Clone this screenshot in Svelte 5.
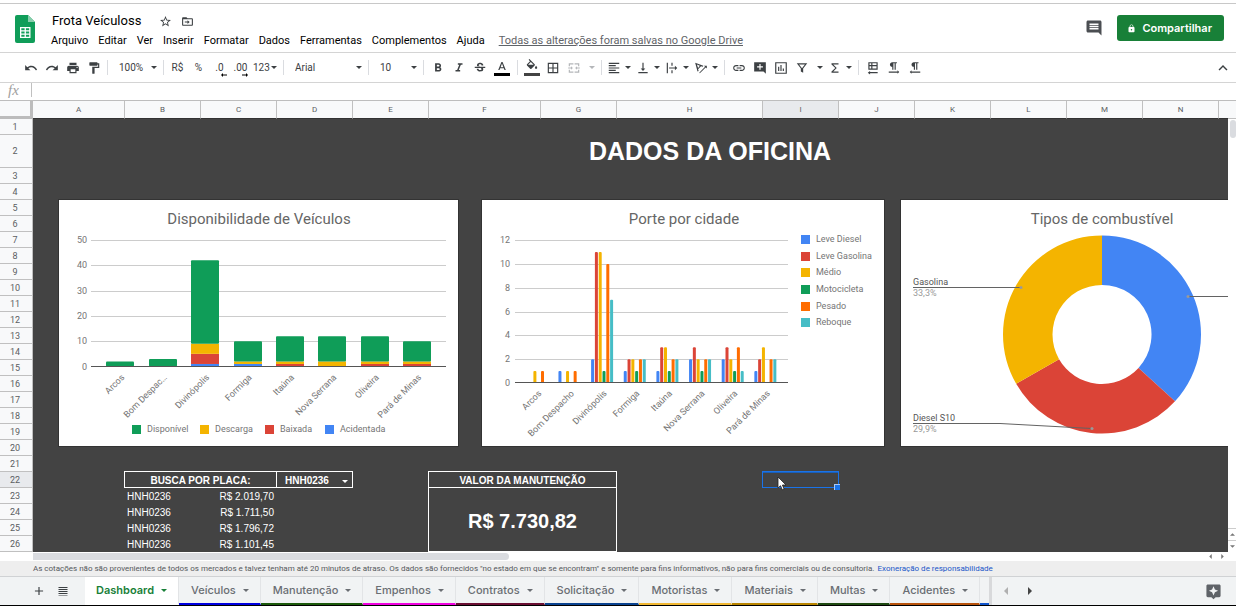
<script>
  const menus = ['Arquivo', 'Editar', 'Ver', 'Inserir', 'Formatar', 'Dados', 'Ferramentas', 'Complementos', 'Ajuda'];

  const columns = [
    ['A', 92], ['B', 76], ['C', 76], ['D', 76], ['E', 76], ['F', 112], ['G', 76], ['H', 146],
    ['I', 76], ['J', 76], ['K', 76], ['L', 76], ['M', 76], ['N', 76], ['O', 76]
  ];
  const rows = Array.from({ length: 26 }, (_, i) => i + 1);
  const costs = { 23: 'R$ 2.019,70', 24: 'R$ 1.711,50', 25: 'R$ 1.796,72', 26: 'R$ 1.101,45' };

  const tabs = [
    ['Dashboard', 'transparent'], ['Veículos', '#0000e0'], ['Manutenção', '#1c5a0c'], ['Empenhos', '#f000e0'],
    ['Contratos', '#6a0f33'], ['Solicitação', '#0b4390'], ['Motoristas', '#f1b732'], ['Materiais', '#b98500'],
    ['Multas', '#1f4a12'], ['Acidentes', '#b8530c']
  ];

  const blue = '#4285f4', red = '#db4437', yellow = '#f4b400', green = '#0f9d58', orange = '#ff6d00', teal = '#46bdc6';
  const cities = ['Arcos', 'Bom Despacho', 'Divinópolis', 'Formiga', 'Itaúna', 'Nova Serrana', 'Oliveira', 'Pará de Minas'];

  // Stacked from the axis up: acidentada, baixada, descarga, disponível
  const stackColors = [blue, red, yellow, green];
  const stacks = [
    [0, 0, 0, 2], [0, 0, 0, 3], [1, 4, 4, 33], [1, 0, 1, 8],
    [0, 1, 1, 10], [0, 0, 2, 10], [0, 1, 1, 10], [0, 1, 1, 8]
  ];
  const stackY = (v) => 166.5 - v * 2.53;
  const stackSegments = stacks.flatMap((values, i) => {
    let base = 0;
    return values.map((v, k) => {
      const seg = { x: Math.round(47.4 + i * 42.4), y: stackY(base + v), h: v * 2.53, fill: stackColors[k], top: k === 3 };
      base += v;
      return seg;
    }).filter((s) => s.h > 0);
  });
  const stackLegend = [['Disponível', green, 73], ['Descarga', yellow, 141], ['Baixada', red, 206], ['Acidentada', blue, 266]];

  const groupSeries = [
    ['Leve Diesel', blue], ['Leve Gasolina', red], ['Médio', yellow],
    ['Motocicleta', green], ['Pesado', orange], ['Reboque', teal]
  ];
  const groups = [
    [0, 0, 1, 0, 1, 0], [1, 0, 1, 0, 1, 0], [2, 11, 11, 1, 10, 7], [1, 2, 2, 1, 2, 2],
    [1, 3, 3, 1, 2, 2], [2, 3, 2, 1, 2, 2], [2, 3, 2, 1, 3, 1], [1, 2, 3, 0, 2, 2]
  ];
  const groupY = (v) => 183 - v * 11.9;

  function slice(from, to, fill) {
    const cx = 201, cy = 134.5, R = 99, r = 49.5;
    const pt = (p, rad) => {
      const a = p * 2 * Math.PI;
      return `${(cx + rad * Math.sin(a)).toFixed(2)} ${(cy - rad * Math.cos(a)).toFixed(2)}`;
    };
    return { fill, d: `M${pt(from, R)}A${R} ${R} 0 0 1 ${pt(to, R)}L${pt(to, r)}A${r} ${r} 0 0 0 ${pt(from, r)}Z` };
  }
  const slices = [slice(0, 0.368, blue), slice(0.368, 0.667, red), slice(0.667, 1, yellow)];

  const icons = {
    undo: 'M12.5 8c-2.65 0-5.05.99-6.9 2.6L2 7v9h9l-3.62-3.62c1.39-1.16 3.16-1.88 5.12-1.88 3.54 0 6.55 2.31 7.6 5.5l2.37-.78C21.08 11.03 17.15 8 12.5 8z',
    redo: 'M18.4 10.6C16.55 8.99 14.15 8 11.5 8c-4.65 0-8.58 3.03-9.96 7.22L3.9 16c1.05-3.19 4.05-5.5 7.6-5.5 1.95 0 3.73.72 5.12 1.88L13 16h9V7l-3.6 3.6z',
    print: 'M19 8H5c-1.66 0-3 1.34-3 3v6h4v4h12v-4h4v-6c0-1.66-1.34-3-3-3zm-3 11H8v-5h8v5zm3-7c-.55 0-1-.45-1-1s.45-1 1-1 1 .45 1 1-.45 1-1 1zm-1-9H6v4h12V3z',
    paint: 'M18 4V3c0-.55-.45-1-1-1H5c-.55 0-1 .45-1 1v4c0 .55.45 1 1 1h12c.55 0 1-.45 1-1V6h1v4H9v11c0 .55.45 1 1 1h2c.55 0 1-.45 1-1v-9h8V4h-3z',
    bold: 'M15.6 10.79c.97-.67 1.65-1.77 1.65-2.79 0-2.26-1.75-4-4-4H7v14h7.04c2.09 0 3.71-1.7 3.71-3.79 0-1.52-.86-2.82-2.15-3.42zM10 6.5h3c.83 0 1.5.67 1.5 1.5s-.67 1.5-1.5 1.5h-3v-3zm3.5 9H10v-3h3.5c.83 0 1.5.67 1.5 1.5s-.67 1.5-1.5 1.5z',
    italic: 'M10 4v2.6h2.4l-3.6 8.800H6V18h8v-2.600h-2.400l3.600-8.800H18V4z',
    strike: 'M7.24 8.75c-.26-.48-.39-1.03-.39-1.67 0-.61.13-1.16.4-1.67.26-.5.63-.93 1.11-1.29.48-.35 1.05-.63 1.7-.83.66-.19 1.39-.29 2.18-.29.81 0 1.54.11 2.21.34.66.22 1.23.54 1.69.94.47.4.83.88 1.08 1.43.25.55.38 1.15.38 1.81h-3.01c0-.31-.05-.59-.15-.85-.09-.27-.24-.49-.44-.68-.2-.19-.45-.33-.75-.44-.3-.1-.66-.16-1.06-.16-.39 0-.74.04-1.03.13-.29.09-.53.21-.72.36-.19.16-.34.34-.44.55-.1.21-.15.43-.15.66 0 .48.25.88.74 1.21.38.25.77.48 1.41.7H7.39c-.05-.08-.11-.17-.15-.25zM21 12v-2H3v2h9.62c.18.07.4.14.55.2.37.17.66.34.87.51.21.17.35.36.43.57.07.2.11.43.11.69 0 .23-.05.45-.14.66-.09.2-.23.38-.42.53-.19.15-.42.26-.71.35-.29.08-.63.13-1.01.13-.43 0-.83-.04-1.18-.13s-.66-.23-.91-.42c-.25-.19-.45-.44-.59-.75-.14-.31-.25-.76-.25-1.21H6.4c0 .55.08 1.13.24 1.58.16.45.37.85.65 1.21.28.35.6.66.98.92.37.26.78.48 1.22.65.44.17.9.3 1.38.39.48.08.96.13 1.44.13.8 0 1.53-.09 2.18-.28s1.21-.45 1.67-.79c.46-.34.82-.77 1.07-1.27s.38-1.07.38-1.71c0-.6-.1-1.14-.31-1.61-.05-.11-.11-.23-.17-.33H21z',
    textColor: 'M11 5L5.500 19h2.250l1.120-3h6.250l1.120 3h2.250L13 5h-2zm-1.380 9L12 7.670 14.380 14H9.620z',
    fill: 'M16.56 8.94L7.62 0 6.21 1.41l2.38 2.38-5.15 5.15c-.59.59-.59 1.54 0 2.12l5.5 5.5c.29.29.68.44 1.06.44s.77-.15 1.06-.44l5.5-5.5c.59-.58.59-1.53 0-2.12zM5.21 10L10 5.21 14.79 10H5.21zM19 11.5s-2 2.17-2 3.5c0 1.1.9 2 2 2s2-.9 2-2c0-1.33-2-3.5-2-3.5z',
    borders: 'M3 3v18h18V3H3zm8 16H5v-6h6v6zm0-8H5V5h6v6zm8 8h-6v-6h6v6zm0-8h-6V5h6v6z',
    merge: 'M3 4h8v2H5v3H3zM13 4h8v5h-2V6h-6zM3 15h2v3h6v2H3zM19 15h2v5h-8v-2h6zM2 11h5V9l3 3-3 3v-2H2zM22 11h-5V9l-3 3 3 3v-2h5z',
    align: 'M15 15H3v2h12v-2zm0-8H3v2h12V7zM3 13h18v-2H3v2zm0 8h18v-2H3v2zM3 3v2h18V3H3z',
    valign: 'M16 13h-3V3h-2v10H8l4 4 4-4zM4 19v2h16v-2H4z',
    wrap: 'M3 3h2v18H3zM11 3h2v5h-2zM11 16h2v5h-2zM7 11h10V8l4 4-4 4v-3H7z',
    rotate: 'M2 3l14 5-1 2-3-1-5 5 1 3-2 1zM5 6l2 6 3-4zM9 20L19 10l-2-2h5v5l-2-2L10 21z',
    link: 'M3.9 12c0-1.71 1.39-3.1 3.1-3.1h4V7H7c-2.76 0-5 2.24-5 5s2.24 5 5 5h4v-1.9H7c-1.71 0-3.1-1.39-3.1-3.1zM8 13h8v-2H8v2zm9-6h-4v1.9h4c1.71 0 3.1 1.39 3.1 3.1s-1.39 3.1-3.1 3.1h-4V17h4c2.76 0 5-2.24 5-5s-2.24-5-5-5z',
    addComment: 'M22 2H2v16h16l4 4zM17 11h-4v4h-2v-4H7V9h4V5h2v4h4v2z',
    comment: 'M21.99 4c0-1.1-.89-2-1.99-2H4c-1.1 0-2 .9-2 2v12c0 1.1.9 2 2 2h14l4 4-.01-18zM18 14H6v-2h12v2zm0-3H6V9h12v2zm0-3H6V6h12v2z',
    chart: 'M2 2v20h20V2zM20 20H4V4h16zM7 10h2v7H7zM11 7h2v10h-2zM15 13h2v4h-2z',
    filter: 'M3 4h18l-7 9v7l-4-2v-5zM7 6l5 6.500L17 6z',
    sum: 'M18 4H6v2l6.500 6L6 18v2h12v-2H9l6-6-6-6h9z',
    sheetDir: 'M4 2h16v13H4zM6 4v3h3V4zM11 4v3h7V4zM6 9v4h3V9zM11 9v4h7V9zM7 17v2h13v2H7v2l-4-3z',
    ltr: 'M9 10v5h2V4h2v11h2V4h2V2H9C6.79 2 5 3.79 5 6s1.790 4 4 4zm12 9l-3-3v2H3v2h15v2l3-3z',
    rtl: 'M10 10v5h2V4h2v11h2V4h2V2h-8C7.79 2 6 3.79 6 6s1.790 4 4 4zm-4 8v-2l-3 3 3 3v-2h15v-2H6z',
    collapse: 'M12 8l-6 6 1.41 1.41L12 10.830l4.590 4.580L18 14z',
    star: 'M22 9.24l-7.19-.62L12 2 9.19 8.63 2 9.24l5.46 4.73L5.82 21 12 17.27 18.18 21l-1.63-7.03L22 9.24zM12 15.4l-3.76 2.27 1-4.28-3.32-2.88 4.38-.38L12 6.1l1.710 4.040 4.380.380-3.320 2.880 1 4.280L12 15.400z',
    move: 'M20 6h-8l-2-2H4c-1.100 0-2 .9-2 2v12c0 1.100.9 2 2 2h16c1.100 0 2-.9 2-2V8c0-1.100-.9-2-2-2zm0 12H4V8h16zM7 12h5V9.500l4 3.500-4 3.500V14H7z',
    lock: 'M18 8h-1V6c0-2.760-2.240-5-5-5S7 3.240 7 6v2H6c-1.100 0-2 .9-2 2v10c0 1.100.9 2 2 2h12c1.100 0 2-.9 2-2V10c0-1.100-.9-2-2-2zm-6 9c-1.100 0-2-.9-2-2s.9-2 2-2 2 .9 2 2-.9 2-2 2zm3.100-9H8.900V6c0-1.710 1.390-3.100 3.100-3.100 1.710 0 3.100 1.390 3.100 3.100v2z',
    plus: 'M19 13h-6v6h-2v-6H5v-2h6V5h2v6h6v2z',
    list: 'M3 4h18v2H3zM3 8h18v2H3zM3 12h18v2H3zM3 16h18v2H3zM3 20h18v1H3z',
    explore: 'M4 2h16c1.100 0 2 .9 2 2v14c0 1.100-.9 2-2 2h-5l-3 3-3-3H4c-1.100 0-2-.9-2-2V4c0-1.100.9-2 2-2zM12 4.500L10 9l-4.500 2L10 13l2 4.500L14 13l4.500-2L14 9z'
  };
</script>

{#snippet icon(name, size = 14)}
  <svg class="ico" width={size} height={size} viewBox="0 0 24 24" aria-hidden="true"><path fill-rule="evenodd" d={icons[name]} /></svg>
{/snippet}

{#snippet tri()}
  <svg class="tri" width="6" height="3" viewBox="0 0 6 3" aria-hidden="true"><path d="M0 0h6L3 3z" /></svg>
{/snippet}

{#snippet tool(name, label)}
  <button class="tool" aria-label={label}>{@render icon(name)}</button>
{/snippet}

{#snippet drop(name, label, kind = '')}
  <button class="drop {kind}" aria-label={label}>{@render icon(name)}{@render tri()}</button>
{/snippet}

<div class="app">
  <header class="top">
    <svg class="logo" width="20" height="28" viewBox="0 0 20 28" aria-hidden="true">
      <path fill="#109d59" d="M2 0h11l7 7v19a2 2 0 0 1-2 2H2a2 2 0 0 1-2-2V2a2 2 0 0 1 2-2z" />
      <path fill="#87ceac" d="M13 0l7 7h-7z" />
      <path fill="#fff" fill-rule="evenodd" d="M5 12h10.500v11H5zM6.300 13.300v2h3.300v-2zM10.900 13.300v2h3.300v-2zM6.300 16.500v2h3.300v-2zM10.900 16.500v2h3.300v-2zM6.300 19.700v2h3.300v-2zM10.900 19.700v2h3.300v-2z" />
    </svg>
    <div class="doc">
      <div class="titleRow">
        <h1>Frota Veículoss</h1>
        <button class="plain" aria-label="Marcar com estrela">{@render icon('star', 13)}</button>
        <button class="plain" aria-label="Mover">{@render icon('move', 13)}</button>
      </div>
      <nav class="menus">
        {#each menus as m}<button class="menu">{m}</button>{/each}
        <a class="saved" href="#historico">Todas as alterações foram salvas no Google Drive</a>
      </nav>
    </div>
    <button class="plain comments" aria-label="Comentários">{@render icon('comment', 18)}</button>
    <button class="share">{@render icon('lock', 9)}Compartilhar</button>
  </header>

  <div class="toolbar" role="toolbar" aria-label="Ferramentas">
    {@render tool('undo', 'Desfazer')}
    {@render tool('redo', 'Refazer')}
    {@render tool('print', 'Imprimir')}
    {@render tool('paint', 'Pintar formatação')}
    <i class="sep"></i>
    <span class="pick zoom"><select aria-label="Zoom"><option>100%</option></select>{@render tri()}</span>
    <i class="sep"></i>
    <button class="tool">R$</button>
    <button class="tool">%</button>
    <button class="tool dec">.0<svg width="6" height="4" viewBox="0 0 6 4" aria-hidden="true"><path d="M0 2l2-2v1.400h4v1.200H2V4z" /></svg></button>
    <button class="tool dec">.00<svg width="6" height="4" viewBox="0 0 6 4" aria-hidden="true"><path d="M6 2L4 0v1.400H0v1.200h4V4z" /></svg></button>
    <button class="drop">123{@render tri()}</button>
    <i class="sep"></i>
    <span class="pick font"><select aria-label="Fonte"><option>Arial</option></select>{@render tri()}</span>
    <i class="sep"></i>
    <span class="pick size"><select aria-label="Tamanho"><option>10</option></select>{@render tri()}</span>
    <i class="sep"></i>
    {@render tool('bold', 'Negrito')}
    {@render tool('italic', 'Itálico')}
    {@render tool('strike', 'Tachado')}
    <button class="tool swatch text" aria-label="Cor do texto">{@render icon('textColor')}</button>
    <i class="sep"></i>
    <button class="tool swatch" aria-label="Cor de preenchimento">{@render icon('fill')}</button>
    {@render tool('borders', 'Bordas')}
    {@render drop('merge', 'Mesclar células', 'wide off')}
    <i class="sep"></i>
    {@render drop('align', 'Alinhamento horizontal')}
    {@render drop('valign', 'Alinhamento vertical')}
    {@render drop('wrap', 'Ajuste de texto')}
    {@render drop('rotate', 'Rotação de texto')}
    <i class="sep"></i>
    {@render tool('link', 'Inserir link')}
    {@render tool('addComment', 'Inserir comentário')}
    {@render tool('chart', 'Inserir gráfico')}
    {@render drop('filter', 'Filtro', 'wide')}
    {@render drop('sum', 'Funções')}
    <i class="sep"></i>
    {@render tool('sheetDir', 'Direção da planilha')}
    {@render tool('ltr', 'Da esquerda para a direita')}
    {@render tool('rtl', 'Da direita para a esquerda')}
    <button class="tool collapse" aria-label="Ocultar menus">{@render icon('collapse', 18)}</button>
  </div>

  <label class="formula"><span>fx</span><input aria-label="Fórmula" /></label>

  <main class="body">
    <div class="sheet">
      <table>
        <colgroup>
          <col style="width:33px" />
          {#each columns as [name, w] (name)}<col style="width:{w}px" />{/each}
        </colgroup>
        <thead>
          <tr>
            <th class="corner"></th>
            {#each columns as [name] (name)}<th class:active={name === 'I'}>{name === 'O' ? '' : name}</th>{/each}
          </tr>
        </thead>
        <tbody>
          {#each rows as n (n)}
            <tr class:tall={n === 2}>
              <th class:active={n === 22}>{n}</th>
              {#if n === 2}
                <td colspan="3"></td>
                <td colspan="10" class="heading">DADOS DA OFICINA</td>
                <td colspan="2"></td>
              {:else if n === 22}
                <td></td>
                <td colspan="2" class="box">BUSCA POR PLACA:</td>
                <td class="box"><span class="plate"><select aria-label="Placa"><option>HNH0236</option></select>{@render tri()}</span></td>
                <td></td>
                <td colspan="2" class="box">VALOR DA MANUTENÇÃO</td>
                <td colspan="9"></td>
              {:else if n > 22}
                <td></td>
                <td>HNH0236</td>
                <td class="num">{costs[n]}</td>
                <td colspan="2"></td>
                {#if n === 23}<td colspan="2" rowspan="4" class="box total">R$ 7.730,82</td>{/if}
                <td colspan="8"></td>
              {:else}
                <td colspan="15"></td>
              {/if}
            </tr>
          {/each}
        </tbody>
      </table>

      <svg class="chart c1" width="399" height="246" viewBox="0 0 399 246" role="img" aria-label="Disponibilidade de Veículos">
        <text class="title" x="200" y="24">Disponibilidade de Veículos</text>
        {#each [10, 20, 30, 40, 50] as v}
          <rect class="grid" x="32" y={Math.round(stackY(v))} width="355" height="1" />
        {/each}
        {#each [0, 10, 20, 30, 40, 50] as v}
          <text class="lab end" x="28" y={Math.round(stackY(v)) + 3}>{v}</text>
        {/each}
        {#each stackSegments as s}
          <rect x={s.x} y={s.y} width="28" height={s.h} rx={s.top ? 1 : 0} fill={s.fill} />
        {/each}
        <rect class="axis" x="32" y="166" width="355" height="1" />
        {#each cities as c, i}
          <text class="lab end" transform="translate({66 + i * 42.4} 178) rotate(-45)">{i === 1 ? 'Bom Despac…' : c}</text>
        {/each}
        {#each stackLegend as [name, fill, x]}
          <rect {x} y="225" width="9" height="9" {fill} />
          <text class="lab" x={x + 15} y="232">{name}</text>
        {/each}
      </svg>

      <svg class="chart c2" width="402" height="246" viewBox="0 0 402 246" role="img" aria-label="Porte por cidade">
        <text class="title" x="202" y="24">Porte por cidade</text>
        {#each [2, 4, 6, 8, 10, 12] as v}
          <rect class="grid" x="33" y={Math.round(groupY(v))} width="273" height="1" />
        {/each}
        {#each [0, 2, 4, 6, 8, 10, 12] as v}
          <text class="lab end" x="28" y={Math.round(groupY(v)) + 3}>{v}</text>
        {/each}
        {#each groups as g, i}
          {#each g as v, k}
            {#if v}<rect x={43.8 + i * 32.65 + k * 3.8} y={groupY(v)} width="3" height={v * 11.9} rx="1" fill={groupSeries[k][1]} />{/if}
          {/each}
        {/each}
        <rect class="axis" x="33" y="182" width="273" height="1" />
        {#each cities as c, i}
          <text class="lab end" transform="translate({60 + i * 32.65} 194) rotate(-45)">{c}</text>
        {/each}
        {#each groupSeries as [name, fill], i}
          <rect x="319" y={Math.round(35.2 + i * 16.6)} width="9" height="9" {fill} />
          <text class="lab" x="334" y={Math.round(42.2 + i * 16.6)}>{name}</text>
        {/each}
      </svg>

      <svg class="chart c3" width="402" height="246" viewBox="0 0 402 246" role="img" aria-label="Tipos de combustível">
        <text class="title" x="201" y="24">Tipos de combustível</text>
        {#each slices as s}<path d={s.d} fill={s.fill} />{/each}
        <path class="lead" d="M12 87.500H119M12 223.500H99L191 228.500M287 96.500H402" />
        <circle cx="120" cy="87.500" r="1.500" /><circle cx="191" cy="228.500" r="1.500" /><circle cx="287" cy="96.500" r="1.500" />
        <text class="lab dark" x="12" y="85">Gasolina</text>
        <text class="lab pale" x="12" y="96">33,3%</text>
        <text class="lab dark" x="12" y="221">Diesel S10</text>
        <text class="lab pale" x="12" y="232">29,9%</text>
      </svg>

      <div class="selection"></div>
      <svg class="pointer" width="10" height="15" viewBox="0 0 10 15" aria-hidden="true"><path fill="#fff" stroke="#222" stroke-width=".8" d="M1 1v11l2.500-2.300L5.300 13.800l1.800-.8L5.400 9H9z" /></svg>
    </div>
    <div class="vbar">
      <div class="vhead"></div>
      <div class="vthumb"></div>
      <div class="varrows">
        <span><svg width="5" height="3" viewBox="0 0 6 3" aria-hidden="true"><path d="M0 3h6L3 0z" /></svg></span>
        <span><svg width="5" height="3" viewBox="0 0 6 3" aria-hidden="true"><path d="M0 0h6L3 3z" /></svg></span>
      </div>
    </div>
  </main>

  <div class="hbar">
    <div class="hthumb"></div>
    <div class="harrows">
      <svg width="3" height="5" viewBox="0 0 3 6" aria-hidden="true"><path d="M3 0v6L0 3z" /></svg>
      <svg width="3" height="5" viewBox="0 0 3 6" aria-hidden="true"><path d="M0 0v6l3-3z" /></svg>
    </div>
  </div>

  <p class="notice">As cotações não são provenientes de todos os mercados e talvez tenham até 20 minutos de atraso. Os dados são fornecidos "no estado em que se encontram" e somente para fins informativos, não para fins comerciais ou de consultoria. <a href="#exoneracao">Exoneração de responsabilidade</a></p>

  <footer class="tabs">
    <button class="plain add" aria-label="Adicionar página">{@render icon('plus', 14)}</button>
    <button class="plain all" aria-label="Todas as páginas">{@render icon('list', 12)}</button>
    <div class="strip">
      {#each tabs as [name, color], i (name)}
        <button class="tab" class:current={i === 0} style="border-bottom-color:{color}">{name}{@render tri()}</button>
      {/each}
      <span class="more"></span>
    </div>
    <div class="nav">
      <button class="plain" aria-label="Anterior" disabled><svg width="4" height="8" viewBox="0 0 4 8" aria-hidden="true"><path d="M4 0v8L0 4z" /></svg></button>
      <button class="plain" aria-label="Próxima"><svg width="4" height="8" viewBox="0 0 4 8" aria-hidden="true"><path d="M0 0v8l4-4z" /></svg></button>
      <button class="plain explore" aria-label="Explorar">{@render icon('explore', 17)}</button>
    </div>
  </footer>
</div>

<style>
  :global(body) { margin: 0; background: #fff; }
  .app {
    display: flex; flex-direction: column; height: 100vh; box-sizing: border-box; padding-top: 3px;
    font-family: Roboto, "Liberation Sans", sans-serif; font-size: 11px; color: #3c4043; background: #fff; overflow: hidden;
  }
  button, select, input { font: inherit; color: inherit; border: 0; background: none; padding: 0; margin: 0; }
  select { appearance: none; outline: 0; }
  svg { display: block; flex: none; }
  .ico, .tri { fill: currentColor; }
  .plain { display: flex; align-items: center; }

  .top { display: flex; align-items: flex-start; flex: none; height: 48px; border-top: 1px solid #c8c8c8; border-bottom: 1px solid #d4d4d4; padding: 0 12px 0 15px; }
  .logo { margin-top: 11px; }
  .doc { margin: 8px auto 0 16px; }
  .titleRow { display: flex; align-items: center; gap: 9px; height: 18px; padding-left: 1px; }
  h1 { margin: 0 9px 0 0; font-size: 13px; line-height: 18px; font-weight: 400; color: #000; }
  .menus { display: flex; gap: 10px; line-height: 14px; margin-top: 4px; color: #000; white-space: nowrap; }
  .saved { margin-left: 4px; color: #5f6368; text-decoration: underline; }
  .comments { margin: 15px 14px 0 0; color: #4b4e52; }
  .share {
    display: flex; align-items: center; gap: 6px; margin-top: 11px; height: 26px; padding: 0 12px 0 10px;
    border-radius: 3px; background: #188038; color: #fff; font-weight: 600; font-family: Inter, Roboto, sans-serif;
  }

  .toolbar { display: flex; align-items: center; flex: none; height: 29px; border-bottom: 1px solid #d4d4d4; padding: 0 3px 0 20px; }
  .sep { flex: none; width: 1px; height: 15px; margin: 0 3px; background: #dadce0; }
  .tool { display: flex; align-items: center; justify-content: center; flex: none; width: 21px; height: 22px; font-size: 10px; }
  .drop { display: flex; align-items: center; justify-content: space-between; flex: none; width: 29px; height: 22px; padding: 0 3px 0 2px; font-size: 10px; }
  .wide { width: 35px; padding: 0 3px 0 4px; }
  .off { color: #b4b6b9; }
  .dec { position: relative; }
  .dec svg { position: absolute; right: 3px; bottom: 2px; }
  .pick { position: relative; display: flex; align-items: center; flex: none; padding: 0 3px 0 8px; font-size: 10px; box-sizing: border-box; }
  .pick select { flex: 1; min-width: 0; }
  .zoom { width: 49px; }
  .font { width: 78px; }
  .size { width: 48px; }
  .swatch { flex-direction: column; }
  .swatch::after { content: ""; width: 16px; height: 3px; background: #434343; }
  .text { width: 24px; }
  .text::after { background: #000; }
  .collapse { margin-left: auto; }

  .formula { display: flex; align-items: flex-start; flex: none; height: 17px; border-bottom: 1px solid #bdbdbd; padding-left: 8px; }
  .formula span { width: 23px; font: italic 15px/14px "Liberation Serif", serif; color: #a0a0a0; border-right: 1px solid #c0c0c0; margin-right: 6px; }
  .formula input { flex: 1; min-width: 0; height: 14px; outline: 0; }

  .body { display: flex; flex: 1; min-height: 0; }
  .sheet { position: relative; flex: 1; min-width: 0; overflow: hidden; background: #434343; }
  table { table-layout: fixed; width: 1295px; border-collapse: separate; border-spacing: 0; font: 10px/12px "Liberation Sans", Arial, sans-serif; color: #fff; }
  th, td { box-sizing: border-box; height: 16px; padding: 0; white-space: nowrap; overflow: visible; }
  td { padding: 2px 3px 0 2px; }
  th { background: #f8f9fa; color: #5b5e62; font: 9px/12px Roboto, sans-serif; border-right: 1px solid #c0c0c0; border-bottom: 1px solid #c0c0c0; }
  thead th { height: 18px; border-bottom-color: #333; font-size: 8px; }
  tbody th { padding: 0 5px 0 3px; }
  thead .corner { border-right: 3px solid #bcbcbc; border-bottom: 3px solid #bcbcbc; }
  th.active { background: #e8eaed; }
  .tall th, .tall td { height: 33px; }
  .tall .heading { padding: 0 0 2px; font-size: 25px; line-height: 30px; font-weight: 700; text-align: center; }
  .num { text-align: right; }
  .box { font-weight: 700; text-align: center; box-shadow: -1px -1px #fff, -1px 0 #fff, 0 -1px #fff, inset -1px -1px #fff; }
  .total { font-size: 20px; line-height: 24px; }
  .plate { display: flex; align-items: center; justify-content: space-between; padding: 0 2px 0 6px; }

  .chart { position: absolute; top: 99px; background: #fff; box-shadow: 0 0 0 1px #333; font-family: Roboto, sans-serif; }
  .c1 { left: 59px; }
  .c2 { left: 482px; }
  .c3 { left: 901px; }
  .title { font-size: 15px; fill: #666; text-anchor: middle; }
  .lab { font-size: 9px; fill: #757575; }
  .end { text-anchor: end; }
  .dark { fill: #555; }
  .pale { fill: #999; }
  .grid { fill: #ccc; }
  .axis { fill: #555; }
  .lead { fill: none; stroke: #636363; stroke-width: 1; }
  circle { fill: #999; }

  .selection { position: absolute; left: 762px; top: 370px; width: 75px; height: 15px; border: 1px solid #1a73e8; box-shadow: inset 0 1px #1a5fb8; }
  .selection::after { content: ""; position: absolute; right: -2px; bottom: -3px; width: 5px; height: 5px; background: #1a73e8; border: 1px solid #a9c8f5; border-width: 1px 0 0 1px; }
  .pointer { position: absolute; left: 777px; top: 375px; }

  .vbar { display: flex; flex-direction: column; flex: none; width: 8px; background: #fff; }
  .vhead { height: 17px; background: #f8f9fa; border-bottom: 1px solid #c0c0c0; }
  .vthumb { height: 18px; margin: 1px 0 0 2px; border-radius: 3px; background: #dadce0; }
  .varrows { margin-top: auto; fill: #777; }
  .varrows span { display: flex; align-items: center; justify-content: center; height: 11px; border-top: 1px solid #ccc; }

  .hbar { display: flex; justify-content: space-between; align-items: center; flex: none; height: 9px; padding: 0 12px 0 33px; }
  .hthumb { width: 40%; height: 7px; border-radius: 0 4px 4px 0; background: #dadce0; }
  .harrows { display: flex; gap: 9px; fill: #777; }

  .notice { flex: none; margin: 0; height: 15px; padding-left: 33px; background: #eee; font-size: 8px; line-height: 15px; color: #55585c; white-space: nowrap; }
  .notice a { color: #1a56c8; text-decoration: none; margin-left: 1px; }

  .tabs { display: flex; flex: none; height: 28px; background: #f1f3f4; border-top: 1px solid #d0d2d4; border-bottom: 1px solid #000; }
  .add { margin-left: 32px; }
  .all { margin: 0 16px 0 11px; }
  .strip { display: flex; flex: 0 1 auto; min-width: 0; overflow: hidden; border-right: 3px solid #d8d9db; }
  .tab {
    display: flex; align-items: center; gap: 7px; flex: none; padding: 0 11px 0 12px; border-right: 1px solid #e2e4e6; border-bottom: 2px solid;
    font-family: Inter, Roboto, sans-serif; font-weight: 500; color: #6a6e73;
  }
  .current { background: #fff; color: #188038; font-weight: 600; padding: 0 11px; }
  .more { width: 9px; border-bottom: 2px solid #1155cc; }
  .nav { display: flex; align-items: center; flex: 1; gap: 20px; padding: 0 14px 0 12px; fill: #444; }
  .nav button:disabled { fill: #b0b0b0; }
  .explore { margin-left: auto; color: #5f6368; }
</style>
